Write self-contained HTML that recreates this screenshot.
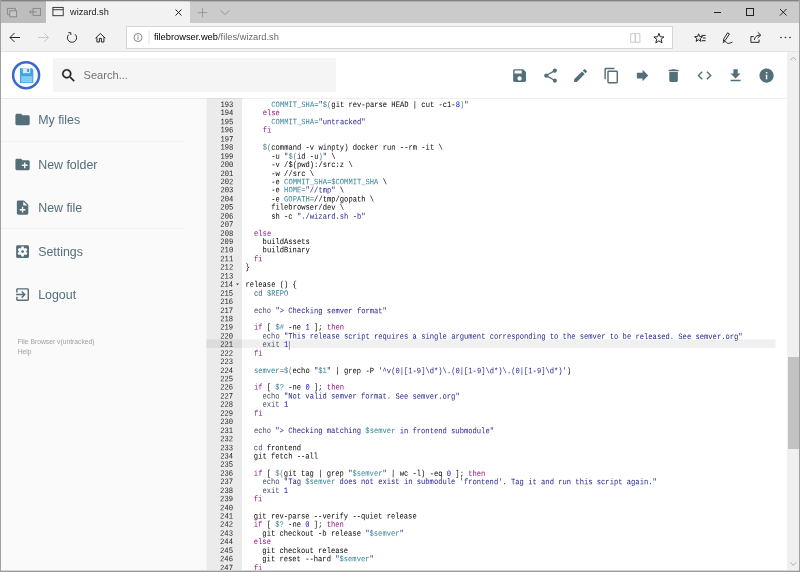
<!DOCTYPE html>
<html><head><meta charset="utf-8"><title>wizard.sh</title>
<style>
*{box-sizing:border-box;margin:0;padding:0}
html,body{width:800px;height:572px;overflow:hidden;background:#fff;font-family:"Liberation Sans",sans-serif;}
#win{position:absolute;left:0;top:0;width:800px;height:572px;overflow:hidden;background:#fff}
#win{will-change:transform}
#bb{position:absolute;left:0;top:570px;width:800px;height:2px;background:linear-gradient(#d4d4d4 0,#d4d4d4 50%,#9c9c9c 50%,#9c9c9c 100%);z-index:9}
#bt{position:absolute;left:0;top:1px;width:800px;height:1px;background:rgba(0,0,0,.13);z-index:9}
#bl{position:absolute;left:0;top:0;width:1px;height:572px;background:#a0a0a0;z-index:9}
#br{position:absolute;left:799.3px;top:0;width:1px;height:572px;background:#a0a0a0;z-index:9}
#tabbar{position:absolute;left:0;top:0;width:800px;height:23px;background:#cbcbcb;border-top:1px solid #828282}
#tabbar .left{position:absolute;left:0;top:0;width:46px;height:22px;background:#bdbdbd}
#tabbar .tab{position:absolute;left:46px;top:0;width:144px;height:22px;background:#f2f2f2}
#tabbar .tab .title{position:absolute;left:24px;top:5.7px;font-size:9.200px;line-height:11px;color:#222;letter-spacing:0}
#toolbar{position:absolute;left:0;top:23px;width:800px;height:29px;background:#f2f2f2;border-bottom:1px solid #e2e2e2}
#addr{position:absolute;left:126px;top:3px;width:547px;height:22.500px;background:#fff;border:1px solid #d6d6d6}
#addr .url{position:absolute;left:26.900px;top:5.300px;font-size:9.300px;line-height:11px;color:#000;white-space:nowrap}
#addr .url span{color:#6a6a6a}
svg{position:absolute;overflow:visible}
#page{position:absolute;left:1px;top:52px;width:786px;height:520px;background:#fff}
#header{position:absolute;left:0;top:0;width:786px;height:47px;background:#fff;background-clip:padding-box;border-bottom:1px solid rgba(0,0,0,.06);z-index:3}
#search{position:absolute;left:51.700px;top:6.300px;width:283.600px;height:33.700px;background:#f5f5f5}
#search .ph{position:absolute;left:30.800px;top:10.800px;font-size:11.100px;line-height:13px;color:#737373}
#sidebar{position:absolute;left:0;top:46px;padding-top:0;width:206px;height:474px;background:#fafafa}
.nav{position:absolute;left:0;width:206px;height:44px}
.nav span{position:absolute;left:37.2px;top:15.2px;font-size:12.4px;line-height:14px;color:#546E7A;white-space:nowrap}
.sep{position:absolute;left:0;width:183px;height:1px;background:#f2f2f2}
#credits{position:absolute;left:16.700px;top:238.900px;font-size:6.750px;line-height:10px;color:#a0a0a0}
#editor{position:absolute;left:205px;top:46px;width:813px;height:666px;background:#fff;overflow:hidden;transform:translate(0.3px,0) scale(0.714286);transform-origin:0 0;
 font-family:"Liberation Mono","DejaVu Sans Mono",monospace;font-size:10px;line-height:10.438px}
#gutter{position:absolute;left:0;top:0;width:50px;height:666px;background:#ebebeb;color:#1c1c1c;text-align:right}
#gutter div div{padding-right:12.17px;position:relative;height:10.438px}
#actg{position:absolute;left:0;top:338.2px;width:50px;height:12px;background:#dcdcdc}
#gutter i{position:absolute;right:4.2px;top:3px;width:0;height:0;border-left:2.3px solid transparent;border-right:2.3px solid transparent;border-top:2.4px solid #333}
#code{position:absolute;left:54.85px;top:0;width:759px;height:666px;color:#000}
#code div div{height:10.438px;white-space:pre}
#actc{position:absolute;left:50px;top:338.2px;width:746.700px;height:12px;background:#f0f0f0}
#code u{display:inline-block;width:0;height:10.438px;border-left:1.4px solid #777;vertical-align:top;margin-left:1px}
#lines,#glines{position:absolute;left:0;top:0;width:100%;transform:translateY(4.4px) rotate(0.05deg) scaleY(1.15);transform-origin:0 0}
.p{color:#4f7f8a}.k{color:#930F80}.s{color:#22228f}.v{color:#318495}.n{color:#0000CD}.b{color:#454d66}
#scroll{position:absolute;left:787px;top:52px;width:13px;height:520px;background:#f0f0f0}
#thumb{position:absolute;left:.8px;top:305px;width:12px;height:91.600px;background:#c2c2c2}
</style></head><body>
<div id="win"><div id="bb"></div><div id="bt"></div><div id="bl"></div><div id="br"></div>
 <div id="tabbar"><div class="left">
<svg viewBox="0 0 46 22" style="left:0;top:0;width:46px;height:22px" fill="none" stroke="#858585" stroke-width=".9">
 <path d="M9.800 13.700H7.400V7.400h8v2.400"/><rect x="9.800" y="9.800" width="6.800" height="6" fill="#c6c6c6"/>
 <rect x="33" y="7.400" width="7.500" height="7"/><path d="M36.500 10.900h-7M31.300 9.200l-1.800 1.700 1.800 1.700"/>
</svg></div><div class="tab"><svg viewBox="0 0 144 22" style="left:0;top:0;width:144px;height:22px" fill="none" stroke="#2a2a2a" stroke-width=".9">
 <rect x="6.900" y="6.400" width="10.300" height="8.300"/><path d="M6.900 8.700h10.300"/>
 <path d="M129.500 8.500l6 6M135.500 8.500l-6 6" stroke="#222" stroke-width="1"/>
</svg><span class="title">wizard.sh</span></div><svg viewBox="0 0 800 22" style="left:0;top:0;width:800px;height:22px" fill="none" stroke="#8e8e8e" stroke-width="1">
 <path d="M202.500 6.900v9.400M197.800 11.600h9.400" stroke-width=".8"/><path d="M220.500 9.300l4.500 4.300 4.500-4.300" stroke-width=".85"/>
 <g stroke="#222"><path d="M714 11.500h7"/><rect x="746.500" y="7.500" width="7" height="7"/><path d="M780 8l6.500 6.500M786.500 8l-6.500 6.500"/></g>
</svg></div>
 <div id="toolbar"><div id="addr"><div class="url">filebrowser.web<span>/files/wizard.sh</span></div></div><svg viewBox="0 0 800 29" style="left:0;top:0;width:800px;height:29px" fill="none" stroke="#1c1c1c" stroke-width=".95" stroke-linejoin="miter">
 <path d="M20 14.500h-10M14.500 10l-4.500 4.500 4.500 4.500"/>
 <path d="M38 14.500h10.500M44 10l4.500 4.500-4.500 4.500" stroke="#c4c4c4"/>
 <path d="M74.960 11.180A4.600 4.600 0 1 1 68.480 11.740M68.300 9.700h2.500v2.300"/>
 <path d="M95.500 15.200l4.900-4.700 4.900 4.700M96.900 14.300v4.700h2.500v-3.600h2v3.600h2.500v-4.700"/>
 <g stroke="#777" stroke-width=".9"><circle cx="138" cy="14.500" r="4"/><path d="M138 13.500v3.200M138 11.800v1"/></g>
 <path d="M149 8v13" stroke="#ddd"/>
 <g stroke="#c9c9c9"><path d="M630.700 10.700h4.600v8.600h-4.600zM635.300 10.700h4.600v8.600h-4.600z"/></g>
 <path d="M658.90 10.30L660.21 13.80L663.94 13.96L661.02 16.29L662.02 19.89L658.90 17.83L655.78 19.89L656.78 16.29L653.86 13.96L657.59 13.80z"/>
 <path d="M698.60 10.80L699.64 13.57L702.59 13.70L700.28 15.55L701.07 18.40L698.60 16.76L696.13 18.40L696.92 15.55L694.61 13.70L697.56 13.57zM701.500 12.400h4.200M703 15h2.700M702 17.700h3.700"/>
 <path d="M723.300 18.300l.7-2.800 3.600-5.700 1.800 1.100-3.600 5.700zM722.800 19.800c1.800-1.500 3-1.600 3.800-.3s2.500 1.200 5.800-.4"/>
 <path d="M753.700 13.600h-2.800v5.700h8.200v-2.700M754.300 17c.4-3.200 2.600-4.900 6.200-4.900M757.700 9.200l3 2.900-3 2.900"/>
 <g fill="#222" stroke="none"><circle cx="781" cy="14.500" r=".8"/><circle cx="785.500" cy="14.500" r=".8"/><circle cx="790" cy="14.500" r=".8"/></g>
</svg></div>
 <div id="page">
  <div id="header"><div id="search"><div class="ph">Search...</div></div><svg viewBox="0 0 50 46" style="left:0;top:0;width:50px;height:46px"><circle cx="25.100" cy="23.200" r="13" fill="#fbfcff" stroke="#3b68cc" stroke-width="2.500"/><path d="M19 16.200h11.800l1.500 1.500V30.900H19z" fill="#3da4e6"/><rect x="21.800" y="16.200" width="7.400" height="5" fill="#cfeaf8"/><rect x="26.300" y="17" width="1.600" height="3" fill="#2f86c8"/><rect x="20.200" y="24.300" width="11" height="6" fill="#8fd2f3"/><path d="M20.200 26.300h11M20.200 28.300h11" stroke="#6fbfe8" stroke-width=".7"/></svg><svg viewBox="0 0 24 24" style="left:509.59px;top:14.73px;width:17.14px;height:17.14px"><path fill="#546E7A" d="M17 3H5c-1.11 0-2 .9-2 2v14c0 1.1.89 2 2 2h14c1.1 0 2-.9 2-2V7l-4-4zm-5 16c-1.66 0-3-1.34-3-3s1.34-3 3-3 3 1.34 3 3-1.34 3-3 3zm3-10H5V5h10v4z"/></svg><svg viewBox="0 0 24 24" style="left:540.52px;top:14.73px;width:17.14px;height:17.14px"><path fill="#546E7A" d="M18 16.08c-.76 0-1.44.3-1.96.77L8.91 12.7c.05-.23.09-.46.09-.7s-.04-.47-.09-.7l7.05-4.11c.54.5 1.25.81 2.04.81 1.66 0 3-1.34 3-3s-1.34-3-3-3-3 1.34-3 3c0 .24.04.47.09.7L8.04 9.81C7.5 9.31 6.79 9 6 9c-1.66 0-3 1.34-3 3s1.34 3 3 3c.79 0 1.5-.31 2.04-.81l7.12 4.16c-.05.21-.08.43-.08.65 0 1.61 1.31 2.92 2.92 2.92 1.61 0 2.92-1.31 2.92-2.92s-1.31-2.92-2.92-2.92z"/></svg><svg viewBox="0 0 24 24" style="left:571.45px;top:14.73px;width:17.14px;height:17.14px"><path fill="#546E7A" d="M3 17.25V21h3.75L17.81 9.94l-3.75-3.75L3 17.25zM20.71 7.04c.39-.39.39-1.02 0-1.41l-2.34-2.34c-.39-.39-1.02-.39-1.41 0l-1.83 1.83 3.75 3.75 1.83-1.83z"/></svg><svg viewBox="0 0 24 24" style="left:602.38px;top:14.73px;width:17.14px;height:17.14px"><path fill="#546E7A" d="M16 1H4c-1.1 0-2 .9-2 2v14h2V3h12V1zm3 4H8c-1.1 0-2 .9-2 2v14c0 1.1.9 2 2 2h11c1.1 0 2-.9 2-2V7c0-1.1-.9-2-2-2zm0 16H8V7h11v14z"/></svg><svg viewBox="0 0 24 24" style="left:633.31px;top:14.73px;width:17.14px;height:17.14px"><path fill="#546E7A" d="M12 8V4l8 8-8 8v-4H4V8z"/></svg><svg viewBox="0 0 24 24" style="left:664.24px;top:14.73px;width:17.14px;height:17.14px"><path fill="#546E7A" d="M6 19c0 1.1.9 2 2 2h8c1.1 0 2-.9 2-2V7H6v12zM19 4h-3.5l-1-1h-5l-1 1H5v2h14V4z"/></svg><svg viewBox="0 0 24 24" style="left:695.17px;top:14.73px;width:17.14px;height:17.14px"><path fill="#546E7A" d="M9.4 16.6L4.8 12l4.6-4.6L8 6l-6 6 6 6 1.4-1.4zm5.2 0l4.6-4.6-4.6-4.6L16 6l6 6-6 6-1.4-1.4z"/></svg><svg viewBox="0 0 24 24" style="left:726.10px;top:14.73px;width:17.14px;height:17.14px"><path fill="#546E7A" d="M19 9h-4V3H9v6H5l7 7 7-7zM5 18v2h14v-2H5z"/></svg><svg viewBox="0 0 24 24" style="left:757.03px;top:14.73px;width:17.14px;height:17.14px"><path fill="#546E7A" d="M12 2C6.48 2 2 6.48 2 12s4.48 10 10 10 10-4.48 10-10S17.52 2 12 2zm1 15h-2v-6h2v6zm0-8h-2V7h2v2z"/></svg><svg viewBox="0 0 24 24" style="left:59.36px;top:14.61px;width:17.14px;height:17.14px"><path fill="#212121" stroke="#212121" stroke-width=".4" d="M15.5 14h-.79l-.28-.27C15.41 12.59 16 11.11 16 9.5 16 5.91 13.09 3 9.5 3S3 5.910 3 9.5 5.910 16 9.5 16c1.610 0 3.090-.59 4.230-1.570l.27.280v.79l5 4.990L20.490 19l-4.990-5zm-6 0C7.010 14 5 11.990 5 9.500S7.010 5 9.500 5 14 7.010 14 9.500 11.990 14 9.500 14z"/></svg></div>
  <div id="sidebar"><svg viewBox="0 0 24 24" style="left:12.63px;top:13.33px;width:17.14px;height:17.14px"><path fill="#546E7A" d="M10 4H4c-1.1 0-1.99.9-1.99 2L2 18c0 1.1.9 2 2 2h16c1.1 0 2-.9 2-2V8c0-1.1-.9-2-2-2h-8l-2-2z"/></svg><svg viewBox="0 0 24 24" style="left:12.63px;top:57.78px;width:17.14px;height:17.14px"><path fill="#546E7A" d="M20 6h-8l-2-2H4c-1.11 0-1.99.89-1.99 2L2 18c0 1.11.89 2 2 2h16c1.11 0 2-.89 2-2V8c0-1.11-.89-2-2-2zm-1 8h-3v3h-2v-3h-3v-2h3V9h2v3h3v2z"/></svg><svg viewBox="0 0 24 24" style="left:12.63px;top:100.83px;width:17.14px;height:17.14px"><path fill="#546E7A" d="M14 2H6c-1.1 0-1.99.9-1.99 2L4 20c0 1.1.89 2 1.99 2H18c1.1 0 2-.9 2-2V8l-6-6zm2 14h-3v3h-2v-3H8v-2h3v-3h2v3h3v2zm-3-7V3.5L18.5 9H13z"/></svg><svg viewBox="0 0 24 24" style="left:12.63px;top:144.58px;width:17.14px;height:17.14px"><path fill="#546E7A" d="M12 10c-1.1 0-2 .9-2 2s.9 2 2 2 2-.9 2-2-.9-2-2-2zm7-7H5c-1.11 0-2 .9-2 2v14c0 1.1.89 2 2 2h14c1.11 0 2-.9 2-2V5c0-1.1-.89-2-2-2zm-1.75 9c0 .23-.02.46-.05.68l1.48 1.16c.13.11.17.3.08.45l-1.4 2.42c-.09.15-.27.21-.43.15l-1.74-.7c-.36.28-.76.51-1.18.69l-.26 1.85c-.03.17-.18.3-.35.3h-2.8c-.17 0-.32-.13-.35-.29l-.26-1.85c-.43-.18-.82-.41-1.18-.69l-1.74.7c-.16.06-.34 0-.43-.15l-1.4-2.42c-.09-.15-.05-.34.08-.45l1.48-1.16c-.03-.23-.05-.46-.05-.69 0-.23.02-.46.05-.68l-1.48-1.16c-.13-.11-.17-.3-.08-.45l1.4-2.42c.09-.15.27-.21.43-.15l1.74.7c.36-.28.76-.51 1.18-.69l.26-1.85c.03-.17.18-.3.35-.3h2.8c.17 0 .32.13.35.29l.26 1.85c.43.18.82.41 1.18.69l1.74-.7c.16-.06.34 0 .43.15l1.4 2.42c.09.15.05.34-.08.45l-1.48 1.16c.03.23.05.46.05.69z"/></svg><svg viewBox="0 0 24 24" style="left:12.63px;top:188.33px;width:17.14px;height:17.14px"><path fill="#546E7A" d="M10.09 15.59L11.5 17l5-5-5-5-1.41 1.41L12.67 11H3v2h9.670l-2.580 2.590zM19 3H5c-1.11 0-2 .9-2 2v4h2V5h14v14H5v-4H3v4c0 1.1.89 2 2 2h14c1.1 0 2-.9 2-2V5c0-1.1-.9-2-2-2z"/></svg>
   <div class="nav" style="top:0.00px"><span>My files</span></div>
   <div class="sep" style="top:43px"></div>
   <div class="nav" style="top:44.35px"><span>New folder</span></div>
   <div class="nav" style="top:87.50px"><span>New file</span></div>
   <div class="sep" style="top:130.3px"></div>
   <div class="nav" style="top:131.65px"><span>Settings</span></div>
   <div class="nav" style="top:175.30px"><span>Logout</span></div>
   <div id="credits">File Browser v(untracked)<br>Help</div>
  </div>
  <div id="editor">
   <div id="gutter"><div id="actg"></div><div id="glines">
<div>193</div>
<div>194</div>
<div>195</div>
<div>196</div>
<div>197</div>
<div>198</div>
<div>199</div>
<div>200</div>
<div>201</div>
<div>202</div>
<div>203</div>
<div>204</div>
<div>205</div>
<div>206</div>
<div>207</div>
<div>208</div>
<div>209</div>
<div>210</div>
<div>211</div>
<div>212</div>
<div>213</div>
<div>214<i></i></div>
<div>215</div>
<div>216</div>
<div>217</div>
<div>218</div>
<div>219</div>
<div>220</div>
<div class="act">221</div>
<div>222</div>
<div>223</div>
<div>224</div>
<div>225</div>
<div>226</div>
<div>227</div>
<div>228</div>
<div>229</div>
<div>230</div>
<div>231</div>
<div>232</div>
<div>233</div>
<div>234</div>
<div>235</div>
<div>236</div>
<div>237</div>
<div>238</div>
<div>239</div>
<div>240</div>
<div>241</div>
<div>242</div>
<div>243</div>
<div>244</div>
<div>245</div>
<div>246</div>
<div>247</div>
   </div></div>
   <div id="actc"></div><div id="code"><div id="lines">
<div>      <span class="v">COMMIT_SHA=</span><span class="s">"</span><span class="p">$(</span>git rev-parse HEAD | cut -c1-<span class="n">8</span><span class="p">)</span><span class="s">"</span></div>
<div>    <span class="k">else</span></div>
<div>      <span class="v">COMMIT_SHA=</span><span class="s">"untracked"</span></div>
<div>    <span class="k">fi</span></div>
<div>&nbsp;</div>
<div>    <span class="p">$(</span>command -v winpty) docker run --rm -it \</div>
<div>      -u <span class="s">"</span><span class="p">$(</span>id -u<span class="p">)</span><span class="s">"</span> \</div>
<div>      -v /$(pwd):/src:z \</div>
<div>      -w //src \</div>
<div>      -e <span class="v">COMMIT_SHA=</span><span class="v">$COMMIT_SHA</span> \</div>
<div>      -e <span class="v">HOME=</span><span class="s">"//tmp"</span> \</div>
<div>      -e <span class="v">GOPATH=</span>//tmp/gopath \</div>
<div>      filebrowser/dev \</div>
<div>      sh -c <span class="s">"./wizard.sh -b"</span></div>
<div>&nbsp;</div>
<div>  <span class="k">else</span></div>
<div>    buildAssets</div>
<div>    buildBinary</div>
<div>  <span class="k">fi</span></div>
<div>}</div>
<div>&nbsp;</div>
<div>release () {</div>
<div>  <span class="b">cd</span> <span class="v">$REPO</span></div>
<div>&nbsp;</div>
<div>  <span class="b">echo</span> <span class="s">"&gt; Checking semver format"</span></div>
<div>&nbsp;</div>
<div>  <span class="k">if</span> [ <span class="v">$#</span> -ne <span class="n">1</span> ]; <span class="k">then</span></div>
<div>    <span class="b">echo</span> <span class="s">"This release script requires a single argument corresponding to the semver to be released. See semver.org"</span></div>
<div class="act">    <span class="b">exit</span> <span class="n">1</span><u></u></div>
<div>  <span class="k">fi</span></div>
<div>&nbsp;</div>
<div>  <span class="v">semver=</span><span class="p">$(</span>echo <span class="s">"</span><span class="v">$1</span><span class="s">"</span> | grep -P <span class="s">'^v(0|[1-9]\d*)\.(0|[1-9]\d*)\.(0|[1-9]\d*)'</span>)</div>
<div>&nbsp;</div>
<div>  <span class="k">if</span> [ <span class="v">$?</span> -ne <span class="n">0</span> ]; <span class="k">then</span></div>
<div>    <span class="b">echo</span> <span class="s">"Not valid semver format. See semver.org"</span></div>
<div>    <span class="b">exit</span> <span class="n">1</span></div>
<div>  <span class="k">fi</span></div>
<div>&nbsp;</div>
<div>  <span class="b">echo</span> <span class="s">"&gt; Checking matching </span><span class="v">$semver</span><span class="s"> in frontend submodule"</span></div>
<div>&nbsp;</div>
<div>  <span class="b">cd</span> frontend</div>
<div>  git fetch --all</div>
<div>&nbsp;</div>
<div>  <span class="k">if</span> [ <span class="p">$(</span>git tag | grep <span class="s">"</span><span class="v">$semver</span><span class="s">"</span> | wc -l) -eq <span class="n">0</span> ]; <span class="k">then</span></div>
<div>    <span class="b">echo</span> <span class="s">"Tag </span><span class="v">$semver</span><span class="s"> does not exist in submodule 'frontend'. Tag it and run this script again."</span></div>
<div>    <span class="b">exit</span> <span class="n">1</span></div>
<div>  <span class="k">fi</span></div>
<div>&nbsp;</div>
<div>  git rev-parse --verify --quiet release</div>
<div>  <span class="k">if</span> [ <span class="v">$?</span> -ne <span class="n">0</span> ]; <span class="k">then</span></div>
<div>    git checkout -b release <span class="s">"</span><span class="v">$semver</span><span class="s">"</span></div>
<div>  <span class="k">else</span></div>
<div>    git checkout release</div>
<div>    git reset --hard <span class="s">"</span><span class="v">$semver</span><span class="s">"</span></div>
<div>  <span class="k">fi</span></div>
   </div></div>
  </div>
 </div>
 <div id="scroll"><div id="thumb"></div><svg viewBox="0 0 13 520" style="left:0;top:0;width:13px;height:520px" fill="none" stroke="#a6a6a6" stroke-width=".9"><path d="M3.300 8.200l3-3 3 3M3.300 510.300l3 3 3-3"/></svg></div>
</div>
</body></html>
